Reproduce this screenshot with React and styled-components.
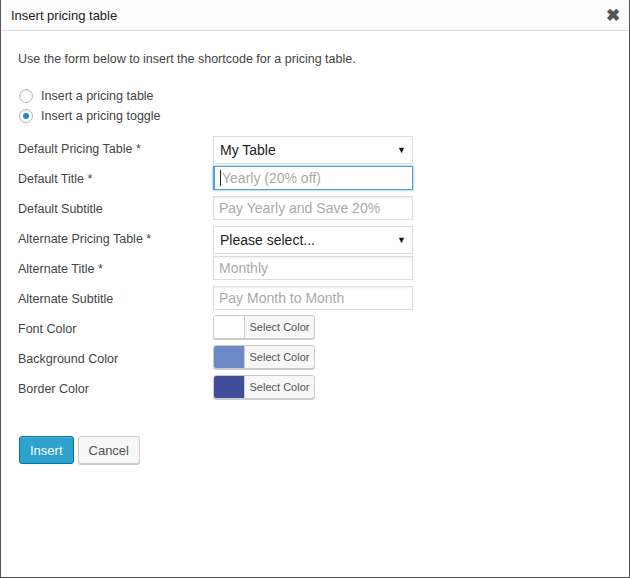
import React from "react";
import styled, { createGlobalStyle } from "styled-components";

const Global = createGlobalStyle`
  html, body { margin: 0; padding: 0; background: #fff; }
  body { font-family: "Liberation Sans", Arial, sans-serif; color: #444; }
`;

const Dialog = styled.div`
  width: 630px; height: 578px; box-sizing: border-box;
  border-left: 1px solid #555; border-right: 1px solid #555; border-bottom: 1px solid #555;
  display: flex; flex-direction: column;
`;
const Header = styled.div`
  height: 31px; box-sizing: border-box; background: #fcfcfc; border-bottom: 1px solid #ddd;
  display: flex; align-items: center; justify-content: space-between; padding: 0 9px 0 10px;
  font-size: 13px; color: #222;
`;
const Close = styled.span`font-size: 17px; font-weight: bold; color: #555; line-height: 1;`;
const Body = styled.div`padding: 21px 17px 0 17px; font-size: 12.5px;`;
const Intro = styled.p`margin: 0 0 19px; line-height: 15px;`;
const RadioRow = styled.label`display: flex; align-items: center; gap: 8px; height: 20px; padding-left: 1px;`;
const Radio = styled.span`
  width: 14px; height: 14px; border-radius: 50%; box-sizing: border-box;
  border: 1px solid #b4b9be; box-shadow: inset 0 1px 2px rgba(0,0,0,.1); background: #fff;
  display: flex; align-items: center; justify-content: center;
  &::after { content: ""; width: 6px; height: 6px; border-radius: 50%; background: ${p => p.$on ? "#1e8cbe" : "transparent"}; }
`;
const Form = styled.div`display: grid; grid-template-columns: 195px 200px; grid-auto-rows: 30px; margin-top: 9px;`;
const Label = styled.div`padding-top: 7px; line-height: 15px;`;
const Cell = styled.div`padding-top: ${p => p.$pt ?? 1}px;`;
const Select = styled.div`
  height: 28px; box-sizing: border-box; border: 1px solid #ddd; background: #fff;
  display: flex; align-items: center; justify-content: space-between; padding: 0 6px;
  font-size: 14px; color: #222;
  &::after { content: "▼"; font-size: 9px; color: #111; }
`;
const Input = styled.div`
  height: 24px; box-sizing: border-box; border: 1px solid ${p => p.$focus ? "#5b9dd9" : "#ddd"};
  box-shadow: ${p => p.$focus ? "0 0 2px rgba(30,140,190,.8)" : "inset 0 1px 2px rgba(0,0,0,.07)"};
  display: flex; align-items: center; padding: 0 5px; font-size: 14px; color: #aaa;
  ${p => p.$focus && `border-left: 2px solid #5b9dd9;`}
`;
const Caret = styled.span`width: 1px; height: 16px; background: #222; margin-right: 1px;`;
const ColorBtn = styled.div`
  width: 102px; height: 24px; box-sizing: border-box; border: 1px solid #ccc; border-radius: 3px;
  display: flex; overflow: hidden; box-shadow: 0 1px 0 #ccc; background: #f7f7f7;
`;
const Swatch = styled.span`width: 30px; background: ${p => p.$c}; border-right: 1px solid #ccc;`;
const ColorText = styled.span`flex: 1; display: flex; align-items: center; justify-content: center; font-size: 11px; color: #555;`;
const Buttons = styled.div`display: flex; gap: 4px; margin-top: 31px; padding-left: 1px;`;
const Button = styled.button`
  height: 28px; padding: 0 10px; border-radius: 3px; font-family: inherit; font-size: 13px;
  border: 1px solid ${p => p.$primary ? "#0074a2" : "#ccc"};
  background: ${p => p.$primary ? "#2ea2cc" : "#f7f7f7"};
  color: ${p => p.$primary ? "#fff" : "#555"};
  box-shadow: ${p => p.$primary ? "inset 0 1px 0 rgba(120,200,230,.5)" : "0 1px 0 #ccc"};
`;

export default function App() {
  return (
    <>
      <Global />
      <Dialog>
        <Header><span>Insert pricing table</span><Close>✖</Close></Header>
        <Body>
          <Intro>Use the form below to insert the shortcode for a pricing table.</Intro>
          <RadioRow><Radio />Insert a pricing table</RadioRow>
          <RadioRow><Radio $on />Insert a pricing toggle</RadioRow>
          <Form>
            <Label>Default Pricing Table *</Label><Cell><Select>My Table</Select></Cell>
            <Label>Default Title *</Label><Cell><Input $focus><Caret />Yearly (20% off)</Input></Cell>
            <Label>Default Subtitle</Label><Cell><Input>Pay Yearly and Save 20%</Input></Cell>
            <Label>Alternate Pricing Table *</Label><Cell><Select>Please select...</Select></Cell>
            <Label>Alternate Title *</Label><Cell><Input>Monthly</Input></Cell>
            <Label>Alternate Subtitle</Label><Cell><Input>Pay Month to Month</Input></Cell>
            <Label>Font Color</Label><Cell $pt={0}><ColorBtn><Swatch $c="#fff" /><ColorText>Select Color</ColorText></ColorBtn></Cell>
            <Label>Background Color</Label><Cell $pt={0}><ColorBtn><Swatch $c="#6b89c7" /><ColorText>Select Color</ColorText></ColorBtn></Cell>
            <Label>Border Color</Label><Cell $pt={0}><ColorBtn><Swatch $c="#3f4d9a" /><ColorText>Select Color</ColorText></ColorBtn></Cell>
          </Form>
          <Buttons><Button $primary>Insert</Button><Button>Cancel</Button></Buttons>
        </Body>
      </Dialog>
    </>
  );
}
